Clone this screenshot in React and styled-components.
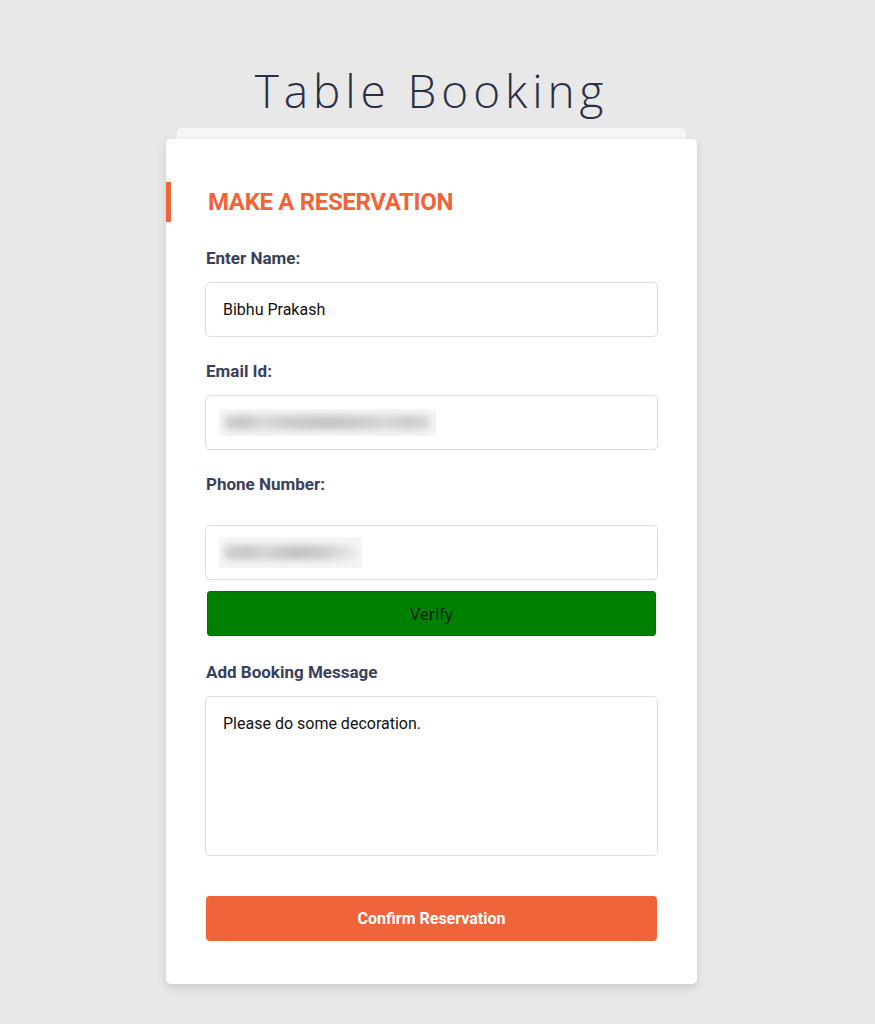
import React, { useState } from 'react';
import styled, { createGlobalStyle } from 'styled-components';

const GlobalStyle = createGlobalStyle`
  html, body {
    margin: 0;
    padding: 0;
    background: #e8e8e8;
  }
  body {
    font-family: Roboto, "Liberation Sans", Arial, sans-serif;
  }
  * {
    box-sizing: border-box;
  }
`;

const Page = styled.div`
  min-height: 1024px;
  padding: 62px 12px 40px 0;
  display: flex;
  flex-direction: column;
  align-items: center;
`;

const Title = styled.h1`
  margin: 0 0 10px 0;
  font-family: "Open Sans", "Noto Sans", sans-serif;
  font-weight: 300;
  font-size: 46px;
  line-height: 56px;
  letter-spacing: 4.9px;
  padding-left: 0;
  color: #2b2f45;
`;

const CardStack = styled.div`
  width: 531px;
  display: flex;
  flex-direction: column;
`;

const BackSheet = styled.div`
  height: 11px;
  margin: 0 11px;
  background: #f6f6f6;
  border-radius: 5px 5px 0 0;
`;

const Card = styled.div`
  background: #ffffff;
  border-radius: 5px;
  padding: 43px 39px 43px 0;
  box-shadow: 0 4px 10px rgba(0, 0, 0, 0.12);
`;

const Heading = styled.h2`
  margin: 0 0 26px 0;
  height: 40px;
  display: flex;
  align-items: center;
  border-left: 5px solid #f0643b;
  padding-left: 37px;
  font-size: 24px;
  letter-spacing: -0.35px;
  font-weight: 700;
  color: #f0643b;
  text-transform: uppercase;
`;

const Form = styled.form`
  padding-left: 40px;
  display: flex;
  flex-direction: column;
`;

const Label = styled.label`
  display: block;
  padding-left: 1px;
  font-size: 17px;
  line-height: 20px;
  font-weight: 700;
  color: #39415a;
  margin-bottom: ${({ gap }) => gap || 14}px;
`;

const Field = styled.div`
  margin-left: -1px;
  margin-bottom: ${({ after }) => after || 24}px;
`;

const TextInput = styled.input`
  display: block;
  width: 100%;
  height: 55px;
  border: 1px solid #dedede;
  border-radius: 5px;
  padding: 0 17px;
  font-family: Roboto, "Liberation Sans", sans-serif;
  font-size: 16px;
  color: #111;
  background: #fff;
  outline: none;
`;

const MaskedBox = styled.div`
  height: 55px;
  border: 1px solid #dedede;
  border-radius: 5px;
  padding: 0 13px;
  display: flex;
  align-items: center;
  overflow: hidden;
`;

const BlurPatch = styled.div`
  width: ${({ w }) => w}px;
  height: ${({ h }) => h}px;
  background: #f5f5f5;
  display: flex;
  align-items: center;
  padding: 0 5px;
  overflow: hidden;
`;

const Smudge = styled.span`
  display: block;
  flex: 1;
  height: 15px;
  border-radius: 6px;
  background: ${({ fill }) => fill};
  filter: blur(3px);
`;

const VerifyButton = styled.button`
  display: block;
  width: 449px;
  margin: 11px 2px 0 2px;
  height: 45px;
  border: 1px solid #0a6d0a;
  border-radius: 3px;
  background: #008000;
  color: #111;
  font-family: "Open Sans", "Noto Sans", sans-serif;
  font-size: 16px;
  cursor: pointer;
`;

const MessageArea = styled.textarea`
  display: block;
  width: 100%;
  height: 160px;
  border: 1px solid #dedede;
  border-radius: 5px;
  padding: 16px 17px;
  font-family: Roboto, "Liberation Sans", sans-serif;
  font-size: 16px;
  line-height: 22px;
  color: #111;
  resize: none;
  outline: none;
`;

const ConfirmButton = styled.button`
  display: block;
  width: 451px;
  margin: 0 1px 0 0;
  height: 45px;
  border: none;
  border-radius: 4px;
  background: #f0643b;
  color: #fff;
  font-family: Roboto, "Liberation Sans", sans-serif;
  font-weight: 700;
  font-size: 16px;
  cursor: pointer;
`;

const emailSmudge =
  'linear-gradient(90deg, #d2d2d2 0%, #c8c8c8 10%, #dadada 18%, #cccccc 32%, #c6c6c6 52%, #cfcfcf 68%, #d8d8d8 78%, #cdcdcd 90%, #dcdcdc 100%)';
const phoneSmudge =
  'linear-gradient(90deg, #d0d0d0 0%, #c9c9c9 18%, #d6d6d6 30%, #c2c2c2 52%, #cbcbcb 72%, #ececec 100%)';

const App = () => {
  const [name, setName] = useState('Bibhu Prakash');
  const [message, setMessage] = useState('Please do some decoration.');

  return (
    <>
      <GlobalStyle />
      <Page>
        <Title>Table Booking</Title>
        <CardStack>
          <BackSheet />
          <Card>
            <Heading>Make a Reservation</Heading>
            <Form onSubmit={(e) => e.preventDefault()}>
              <Field>
                <Label>Enter Name:</Label>
                <TextInput value={name} onChange={(e) => setName(e.target.value)} />
              </Field>
              <Field>
                <Label>Email Id:</Label>
                <MaskedBox>
                  <BlurPatch w={217} h={27}>
                    <Smudge fill={emailSmudge} />
                  </BlurPatch>
                </MaskedBox>
              </Field>
              <Field after={26}>
                <Label gap={31}>Phone Number:</Label>
                <MaskedBox>
                  <BlurPatch w={143} h={31}>
                    <Smudge fill={phoneSmudge} />
                  </BlurPatch>
                </MaskedBox>
                <VerifyButton type="button">Verify</VerifyButton>
              </Field>
              <Field after={40}>
                <Label>Add Booking Message</Label>
                <MessageArea value={message} onChange={(e) => setMessage(e.target.value)} />
              </Field>
              <ConfirmButton type="submit">Confirm Reservation</ConfirmButton>
            </Form>
          </Card>
        </CardStack>
      </Page>
    </>
  );
};

export default App;
